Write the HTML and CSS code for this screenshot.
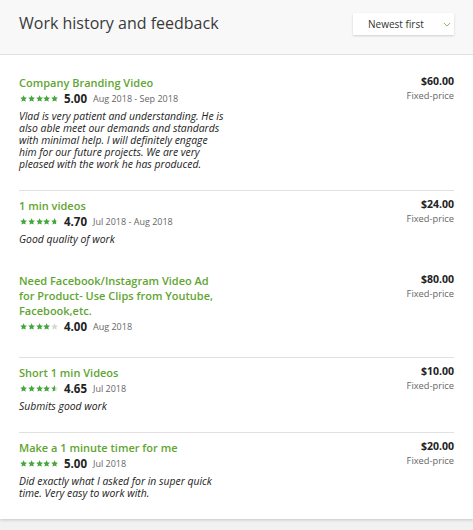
FILE: index.html
```html
<!DOCTYPE html>
<html lang="en">
<head>
<meta charset="utf-8">
<title>Work history and feedback</title>
<link rel="stylesheet" href="styles.css">
</head>
<body>
<svg width="0" height="0" class="defs" aria-hidden="true">
  <symbol id="star" viewBox="0 0 10 10"><path d="M5 0.4l1.4 3 3.2.3-2.4 2.2.7 3.2L5 7.5 2.1 9.1l.7-3.2L.4 3.7l3.2-.3z"/></symbol>
</svg>
<section class="card">
  <header class="card-head">
    <h2 class="card-title">Work history and feedback</h2>
    <button class="sort">Newest first
      <svg class="chev" viewBox="0 0 10 6" width="8" height="5"><path d="M1 1l4 4 4-4" fill="none" stroke="currentColor" stroke-width="1.2"/></svg>
    </button>
  </header>
  <ul class="jobs">
    <li class="job">
      <div class="job-main">
        <a class="job-title">Company Branding Video</a>
        <div class="meta">
          <span class="stars"><span class="stars-bg"><svg><use href="#star"/></svg><svg><use href="#star"/></svg><svg><use href="#star"/></svg><svg><use href="#star"/></svg><svg><use href="#star"/></svg></span><span class="stars-fill" style="width:100%"><svg><use href="#star"/></svg><svg><use href="#star"/></svg><svg><use href="#star"/></svg><svg><use href="#star"/></svg><svg><use href="#star"/></svg></span></span>
          <strong class="score">5.00</strong>
          <span class="dates">Aug 2018 - Sep 2018</span>
        </div>
        <p class="feedback">Vlad is very patient and understanding. He is also able meet our demands and standards with minimal help. I will definitely engage him for our future projects. We are very pleased with the work he has produced.</p>
      </div>
      <div class="job-price"><div class="amount">$60.00</div><div class="ptype">Fixed-price</div></div>
    </li>
    <li class="job">
      <div class="job-main">
        <a class="job-title">1 min videos</a>
        <div class="meta">
          <span class="stars"><span class="stars-bg"><svg><use href="#star"/></svg><svg><use href="#star"/></svg><svg><use href="#star"/></svg><svg><use href="#star"/></svg><svg><use href="#star"/></svg></span><span class="stars-fill" style="width:94%"><svg><use href="#star"/></svg><svg><use href="#star"/></svg><svg><use href="#star"/></svg><svg><use href="#star"/></svg><svg><use href="#star"/></svg></span></span>
          <strong class="score">4.70</strong>
          <span class="dates">Jul 2018 - Aug 2018</span>
        </div>
        <p class="feedback">Good quality of work</p>
      </div>
      <div class="job-price"><div class="amount">$24.00</div><div class="ptype">Fixed-price</div></div>
    </li>
    <li class="job job-plain">
      <div class="job-main">
        <a class="job-title">Need Facebook/Instagram Video Ad for Product- Use Clips from Youtube, Facebook,etc.</a>
        <div class="meta">
          <span class="stars"><span class="stars-bg"><svg><use href="#star"/></svg><svg><use href="#star"/></svg><svg><use href="#star"/></svg><svg><use href="#star"/></svg><svg><use href="#star"/></svg></span><span class="stars-fill" style="width:80%"><svg><use href="#star"/></svg><svg><use href="#star"/></svg><svg><use href="#star"/></svg><svg><use href="#star"/></svg><svg><use href="#star"/></svg></span></span>
          <strong class="score">4.00</strong>
          <span class="dates">Aug 2018</span>
        </div>
      </div>
      <div class="job-price"><div class="amount">$80.00</div><div class="ptype">Fixed-price</div></div>
    </li>
    <li class="job">
      <div class="job-main">
        <a class="job-title">Short 1 min Videos</a>
        <div class="meta">
          <span class="stars"><span class="stars-bg"><svg><use href="#star"/></svg><svg><use href="#star"/></svg><svg><use href="#star"/></svg><svg><use href="#star"/></svg><svg><use href="#star"/></svg></span><span class="stars-fill" style="width:93%"><svg><use href="#star"/></svg><svg><use href="#star"/></svg><svg><use href="#star"/></svg><svg><use href="#star"/></svg><svg><use href="#star"/></svg></span></span>
          <strong class="score">4.65</strong>
          <span class="dates">Jul 2018</span>
        </div>
        <p class="feedback">Submits good work</p>
      </div>
      <div class="job-price"><div class="amount">$10.00</div><div class="ptype">Fixed-price</div></div>
    </li>
    <li class="job">
      <div class="job-main">
        <a class="job-title">Make a 1 minute timer for me</a>
        <div class="meta">
          <span class="stars"><span class="stars-bg"><svg><use href="#star"/></svg><svg><use href="#star"/></svg><svg><use href="#star"/></svg><svg><use href="#star"/></svg><svg><use href="#star"/></svg></span><span class="stars-fill" style="width:100%"><svg><use href="#star"/></svg><svg><use href="#star"/></svg><svg><use href="#star"/></svg><svg><use href="#star"/></svg><svg><use href="#star"/></svg></span></span>
          <strong class="score">5.00</strong>
          <span class="dates">Jul 2018</span>
        </div>
        <p class="feedback">Did exactly what I asked for in super quick time. Very easy to work with.</p>
      </div>
      <div class="job-price"><div class="amount">$20.00</div><div class="ptype">Fixed-price</div></div>
    </li>
  </ul>
</section>
</body>
</html>
```
FILE: styles.css
```css
* { box-sizing: border-box; }
html, body { margin: 0; padding: 0; }
body {
  background: #f1f1f1;
  font-family: "Open Sans", "Liberation Sans", sans-serif;
  color: #222;
  height: 530px;
  overflow: hidden;
}
.defs { position: absolute; }
.card {
  background: #fff;
  box-shadow: 0 1px 3px rgba(0,0,0,0.18);
}
.card-head {
  height: 55px;
  background: #f8f8f8;
  border-bottom: 1px solid #e2e2e2;
  display: flex;
  align-items: flex-start;
  justify-content: space-between;
  padding: 0 19px;
}
.card-title {
  margin: 12px 0 0;
  font-size: 16px;
  font-weight: 400;
  color: #3a3a3a;
  line-height: 22px;
}
.sort {
  margin-top: 13px;
  width: 101px;
  height: 22px;
  border: 0;
  background: #fff;
  box-shadow: 0 1px 2px rgba(0,0,0,0.16);
  font-family: inherit;
  font-size: 10px;
  color: #333;
  display: flex;
  align-items: center;
  justify-content: flex-start;
  padding: 0 0 0 15px;
}
.chev { color: #7ab55c; margin-left: 19px; }
.jobs {
  list-style: none;
  margin: 0;
  padding: 12px 19px 0;
}
.job {
  display: flex;
  justify-content: space-between;
  padding: 7px 0 20px;
  border-top: 1px solid #e0e0e0;
}
.job:first-child { border-top-color: transparent; }
.job-plain { border-top-color: transparent; padding-bottom: 22px; }
.job-main { width: 205px; }
.job-title {
  display: block;
  color: #5fa532;
  font-size: 11px;
  font-weight: 600;
  line-height: 15px;
}
.meta {
  display: flex;
  align-items: center;
  height: 17px;
}
.stars {
  position: relative;
  display: inline-block;
  width: 38px;
  height: 8px;
  margin: 0 6px 0 1px;
}
.stars-bg, .stars-fill {
  display: flex;
  gap: 0.6px;
  height: 8px;
  white-space: nowrap;
}
.stars-bg { fill: #d6d6d6; }
.stars-fill {
  position: absolute;
  left: 0;
  top: 0;
  overflow: hidden;
  fill: #43a83a;
}
.stars svg { width: 7.2px; height: 7.2px; flex: none; }
.score {
  font-size: 11.5px;
  font-weight: 700;
  color: #222;
  margin-right: 6px;
}
.dates {
  font-size: 9px;
  color: #666;
}
.feedback {
  margin: 3px 0 0;
  font-size: 10.4px;
  font-style: italic;
  line-height: 12px;
  color: #222;
}
.job-price { text-align: right; margin-top: -1px; }
.amount {
  font-size: 10.5px;
  font-weight: 700;
  line-height: 14px;
  color: #222;
}
.ptype {
  font-size: 9.3px;
  line-height: 16px;
  color: #666;
}
```
